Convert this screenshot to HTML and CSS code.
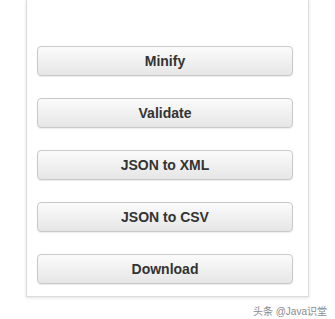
FILE: index.html
```html
<!DOCTYPE html>
<html lang="en">
<head>
    <meta charset="UTF-8">
    <title>JSON Tools</title>
    <link rel="stylesheet" href="styles.css">
</head>
<body>
    <div class="panel">
        <button class="tool-btn">Minify</button>
        <button class="tool-btn">Validate</button>
        <button class="tool-btn">JSON to XML</button>
        <button class="tool-btn">JSON to CSV</button>
        <button class="tool-btn">Download</button>
    </div>
    <div class="watermark">头条 @Java识堂</div>
</body>
</html>
```

FILE: styles.css
```css
body {
    margin: 0;
    background-color: #ffffff;
    font-family: "Liberation Sans", Arial, sans-serif;
}

.panel {
    width: 256px;
    margin-left: 26px;
    padding: 46px 15px 12px 10px;
    background-color: #ffffff;
    border: 1px solid #dcdcdc;
    border-top: none;
    box-shadow: 0 1px 3px rgba(0, 0, 0, 0.12);
    display: flex;
    flex-direction: column;
    gap: 22px;
}

.tool-btn {
    height: 30px;
    width: 100%;
    border: 1px solid #c8c8c8;
    border-radius: 4px;
    background: linear-gradient(to bottom, #fbfbfb, #e6e6e6);
    color: #333333;
    font-family: "Liberation Sans", Arial, sans-serif;
    font-weight: bold;
    font-size: 14px;
    cursor: pointer;
    box-shadow: 0 1px 1px rgba(0, 0, 0, 0.08);
}

.watermark {
    text-align: right;
    padding-right: 8px;
    margin-top: 6px;
    font-size: 10px;
    color: #8a8a8a;
    font-family: "Liberation Sans", "Noto Sans CJK SC", sans-serif;
}
```
